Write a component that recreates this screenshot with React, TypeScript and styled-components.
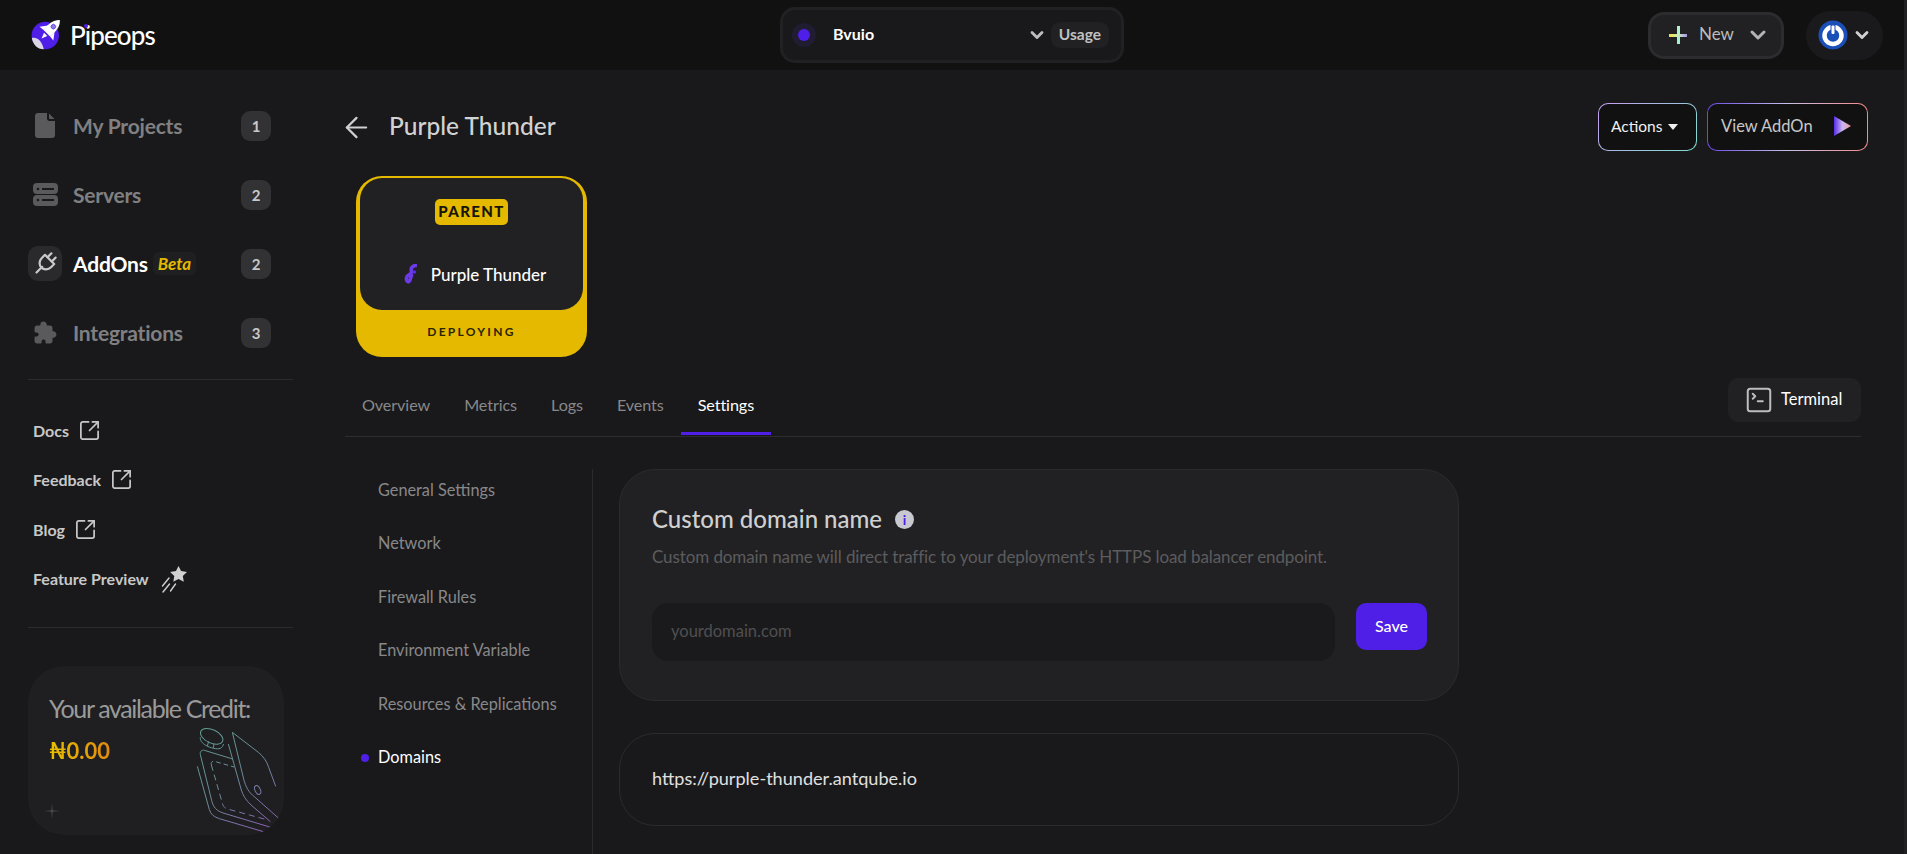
import React from "react";
import styled, { createGlobalStyle } from "styled-components";
import { ArrowLeft, ChevronDown, SquareArrowOutUpRight, SquareTerminal } from "lucide-react";
import { IoExtensionPuzzle } from "react-icons/io5";

const FONT = `"Lato", "Noto Sans", sans-serif`;

const GlobalStyle = createGlobalStyle`
    html, body, #root { height: 100%; }
    body {
        margin: 0;
        background: #19191b;
        font-family: ${FONT};
        color: #fff;
        overflow: hidden;
    }
    * { box-sizing: border-box; }
`;

const navItems = [
    { label: "My Projects", count: 1, icon: <FileIcon /> },
    { label: "Servers", count: 2, icon: <ServerIcon /> },
    { label: "AddOns", count: 2, icon: <PlugIcon />, active: true, beta: true },
    { label: "Integrations", count: 3, icon: <IoExtensionPuzzle size={25} /> },
];
const tabs = ["Overview", "Metrics", "Logs", "Events", "Settings"];
const settingsLinks = ["General Settings", "Network", "Firewall Rules", "Environment Variable", "Resources & Replications", "Domains"];

function FileIcon() {
    return (
        <svg width="20" height="25" viewBox="0 0 20 25" fill="#5a5a5c">
            <path d="M3 0h9v5.500c0 1.400 1 2.500 2.500 2.500H20v14a3 3 0 0 1-3 3H3a3 3 0 0 1-3-3V3a3 3 0 0 1 3-3z" />
            <path d="M14 0.500 19.500 6H15a1 1 0 0 1-1-1z" />
        </svg>
    );
}

function ServerIcon() {
    return (
        <svg width="25" height="23" viewBox="0 0 25 23">
            <rect x="0" y="0" width="25" height="11" rx="4" fill="#5a5a5c" />
            <rect x="0" y="12" width="25" height="11" rx="4" fill="#5a5a5c" />
            <circle cx="5" cy="6" r="1.300" fill="#19191b" />
            <rect x="9" y="5" width="12" height="2" fill="#19191b" />
            <circle cx="5" cy="17" r="1.300" fill="#19191b" />
            <rect x="9" y="16" width="12" height="2" fill="#19191b" />
        </svg>
    );
}

function PlugIcon() {
    return (
        <svg width="26" height="26" viewBox="0 0 26 26" fill="none" stroke="#c9c9c9" strokeWidth="2.200" strokeLinecap="round">
            <g transform="rotate(45 13 13)">
                <path d="M10 6.500V1" />
                <path d="M16 6.500V1" />
                <path d="M6.500 6.500h13v4.500a5.500 6 0 0 1-13 0z" strokeLinejoin="round" />
                <path d="M13 17v8" />
            </g>
        </svg>
    );
}

function RocketLogo() {
    return (
        <svg width="32" height="30" viewBox="0 0 32 30">
            <circle cx="15.300" cy="15.500" r="13.700" fill="#4f1fe8" />
            <path d="M1.800 18c4.500-1.500 10 2 12 11.200C8 29.500 3 25 1.800 18z" fill="#d9d6e6" />
            <g transform="translate(20.500 9.500) rotate(45) scale(1.150)">
                <path d="M0-11.500C4-8 4.800-3 4 4.500H-4C-4.800-3-4-8 0-11.500z" fill="#fff" />
                <path d="M-4-1-8.500 5-4 4.500zM4-1 8.500 5 4 4.500z" fill="#fff" />
                <path d="M-2 6 0 11 2 6z" fill="#fff" />
                <circle cx="0" cy="-3.500" r="2" fill="#8f7ee0" stroke="#4f1fe8" strokeWidth="0.600" />
            </g>
        </svg>
    );
}

function ShootingStar() {
    return (
        <StarSvg width="28" height="28" viewBox="0 0 28 28" fill="none" stroke="#cfcfcf" strokeWidth="1.400" strokeLinecap="round">
            <path d="M17.500 1l2.600 5.100 5.900.9-4.200 4 1 5.800-5.300-2.700-5.200 2.700 1-5.800-4.200-4 5.900-.9z" fill="#d0d0d0" stroke="none" />
            <path d="M8 13 1.500 21" />
            <path d="M8.500 19 2 27" />
            <path d="M14.500 19 9.500 26" />
        </StarSvg>
    );
}

function WalletArt() {
    return (
        <WalletSvg viewBox="540 210 290 340" fill="none" stroke="url(#walletStroke)" strokeWidth="3">
            <defs>
                <linearGradient id="walletStroke" gradientUnits="userSpaceOnUse" x1="560" y1="230" x2="800" y2="510">
                    <stop offset="0" stopColor="#5e9c90" />
                    <stop offset="0.500" stopColor="#6b8a98" />
                    <stop offset="1" stopColor="#8c5fb8" />
                </linearGradient>
            </defs>
            <ellipse cx="605" cy="247" rx="36" ry="20" transform="rotate(25 605 247)" />
            <path d="M571 250c-1 10 5 17 16 24 14 8 34 13 44 9 6-3 9-8 9-13" />
            <path d="M596 262l-4 14M612 270l-2 12" />
            <path d="M667 235l78 60c15 12 26 28 31 45l21 57" />
            <path d="M667 235l34 140c6 24 15 40 33 54l71 63" />
            <path d="M655 270l38 135c6 20 14 33 30 48l58 50" />
            <path d="M668 315l-85-26c-8-2-14 4-12 13l34 138c5 20 14 30 34 37l140 42" />
            <path d="M562 337l36 130c4 14 14 22 30 27l132 39" />
            <path d="M604 333c-2-8 2-12 9-11l59 17" strokeDasharray="14 9" />
            <path d="M604 333l34 118c3 9 8 12 18 15l110 30" strokeDasharray="18 12" />
            <ellipse cx="743" cy="408" rx="8" ry="14" transform="rotate(-25 743 408)" />
        </WalletSvg>
    );
}

export default function App() {
    return (
        <Page>
            <GlobalStyle />
            <Screen>
                <TopBar>
                    <Brand>
                        <RocketLogo />
                        <BrandName>Pipeops</BrandName>
                    </Brand>
                    <ProjectSelect>
                        <ProjectDot />
                        <ProjectName>Bvuio</ProjectName>
                        <ChevronDown size={20} strokeWidth={3.4} color="#bdbdbd" />
                        <UsagePill>Usage</UsagePill>
                    </ProjectSelect>
                    <TopRight>
                        <NewButton>
                            <PlusMark />
                            <span>New</span>
                            <ChevronDown size={24} strokeWidth={3} color="#b5b5b5" />
                        </NewButton>
                        <UserPill>
                            <PowerAvatar viewBox="0 0 30 30">
                                <circle cx="15" cy="15" r="14.500" fill="#1a4fb8" />
                                <circle cx="15" cy="15.500" r="8.500" fill="none" stroke="#fff" strokeWidth="4.500" />
                                <rect x="12.500" y="4" width="5" height="10" fill="#1a4fb8" />
                                <rect x="13.500" y="5.500" width="3" height="8.500" rx="1" fill="#fff" />
                            </PowerAvatar>
                            <ChevronDown size={20} strokeWidth={3.4} color="#d0d0d0" />
                        </UserPill>
                    </TopRight>
                </TopBar>
                <Body>
                    <Sidebar>
                        {navItems.map((item) => (
                            <NavRow key={item.label}>
                                <NavIcon $active={item.active}>{item.icon}</NavIcon>
                                <NavLabel $active={item.active}>{item.label}</NavLabel>
                                {item.beta && <BetaTag>Beta</BetaTag>}
                                <CountBadge>{item.count}</CountBadge>
                            </NavRow>
                        ))}
                        <SideDivider />
                        <SideLinks>
                            <SideLink>Docs<SquareArrowOutUpRight size={23} strokeWidth={1.8} /></SideLink>
                            <SideLink>Feedback<SquareArrowOutUpRight size={23} strokeWidth={1.8} /></SideLink>
                            <SideLink>Blog<SquareArrowOutUpRight size={23} strokeWidth={1.8} /></SideLink>
                            <SideLink>Feature Preview<ShootingStar /></SideLink>
                        </SideLinks>
                        <SideDivider />
                        <CreditCard>
                            <CreditTitle>Your available Credit:</CreditTitle>
                            <CreditAmount>₦0.00</CreditAmount>
                            <Sparkle viewBox="0 0 16 16">
                                <path d="M8 0 8.500 7.500 16 8 8.500 8.500 8 16 7.500 8.500 0 8 7.500 7.500z" fill="#5a5a5c" />
                            </Sparkle>
                            <WalletArt />
                        </CreditCard>
                    </Sidebar>
                    <Content>
                        <HeaderRow>
                            <ArrowLeft size={33} strokeWidth={1.6} color="#d0d0d0" />
                            <PageTitle>Purple Thunder</PageTitle>
                            <HeaderActions>
                                <ActionsButton>Actions<Caret /></ActionsButton>
                                <ViewButton>
                                    View AddOn
                                    <svg width="17" height="20" viewBox="0 0 17 20">
                                        <defs>
                                            <linearGradient id="playFill" x1="0" y1="0" x2="1" y2="0">
                                                <stop offset="0" stopColor="#5a2be8" />
                                                <stop offset="0.500" stopColor="#c9b4f0" />
                                                <stop offset="1" stopColor="#f59a9a" />
                                            </linearGradient>
                                        </defs>
                                        <path d="M0 0 17 10 0 20z" fill="url(#playFill)" />
                                    </svg>
                                </ViewButton>
                            </HeaderActions>
                        </HeaderRow>
                        <NodeCard>
                            <NodeInner>
                                <ParentTag>PARENT</ParentTag>
                                <NodeName>
                                    <svg width="13" height="20" viewBox="0 0 13 20" fill="none" strokeLinecap="round">
                                        <path d="M11.500 1.500C8 2 6.500 4.500 7.500 7.500 8.500 10.500 3 10.500 2.500 13.500 2 16 3.500 18.500 5 17.500 7 16 6.500 13 7.500 11.500" stroke="#6d3ae8" strokeWidth="3.600" />
                                        <circle cx="10.500" cy="8" r="1.700" fill="#5a2be8" />
                                    </svg>
                                    Purple Thunder
                                </NodeName>
                            </NodeInner>
                            <NodeStatus>DEPLOYING</NodeStatus>
                        </NodeCard>
                        <TabRow>
                            {tabs.map((tab) => (
                                <Tab key={tab} $active={tab === "Settings"}>{tab}</Tab>
                            ))}
                            <TerminalButton>
                                <SquareTerminal size={30} strokeWidth={1.6} color="#bdbdbd" />
                                <span>Terminal</span>
                            </TerminalButton>
                        </TabRow>
                        <SettingsArea>
                            <SettingsNav>
                                {settingsLinks.map((link) => (
                                    <SettingsLink key={link} $active={link === "Domains"}>{link}</SettingsLink>
                                ))}
                            </SettingsNav>
                            <Panels>
                                <DomainCard>
                                    <CardTitle>
                                        Custom domain name
                                        <InfoDot>i</InfoDot>
                                    </CardTitle>
                                    <CardHint>Custom domain name will direct traffic to your deployment's HTTPS load balancer endpoint.</CardHint>
                                    <FormRow>
                                        <DomainInput placeholder="yourdomain.com" />
                                        <SaveButton>Save</SaveButton>
                                    </FormRow>
                                </DomainCard>
                                <UrlCard>https://purple-thunder.antqube.io</UrlCard>
                            </Panels>
                        </SettingsArea>
                    </Content>
                </Body>
            </Screen>
            <ScrollEdge />
        </Page>
    );
}

const Page = styled.div`
    display: flex;
    height: 100vh;
    overflow: hidden;
`;
const Screen = styled.div`
    flex: 1;
    min-width: 0;
    display: flex;
    flex-direction: column;
`;
const ScrollEdge = styled.div`
    width: 3px;
    background: #212123;
`;
const TopBar = styled.header`
    height: 70px;
    flex: none;
    display: grid;
    grid-template-columns: 780px 344px 1fr;
    align-items: center;
    background: #111112;
`;
const Brand = styled.div`
    display: flex;
    align-items: center;
    gap: 8px;
    padding-left: 30px;
`;
const BrandName = styled.span`
    position: relative;
    font-size: 26px;
    font-weight: 500;
    letter-spacing: -0.9px;
    color: #fff;
    &::after {
        content: "";
        position: absolute;
        left: 14px;
        top: 5px;
        width: 4px;
        height: 4px;
        border-radius: 50%;
        background: #4f1fe8;
    }
`;
const ProjectSelect = styled.div`
    height: 56px;
    display: flex;
    align-items: center;
    padding: 0 12px 0 9px;
    border: 3px solid #212123;
    border-radius: 15px;
    background: #19191b;
`;
const ProjectDot = styled.span`
    width: 12px;
    height: 12px;
    margin: 0 6px;
    border-radius: 50%;
    background: #4f1fe8;
    box-shadow: 0 0 0 6px #201d33;
`;
const ProjectName = styled.span`
    flex: 1;
    margin-left: 17px;
    padding-bottom: 3px;
    font-size: 16px;
    font-weight: 700;
    color: #fff;
`;
const UsagePill = styled.span`
    margin-left: 4px;
    padding: 0 8px;
    height: 26px;
    line-height: 24px;
    border-radius: 9px;
    background: #212123;
    font-size: 15.500px;
    font-weight: 700;
    color: #c0c0c0;
`;
const TopRight = styled.div`
    display: flex;
    align-items: center;
    justify-content: flex-end;
    padding-right: 21px;
    gap: 22px;
`;
const NewButton = styled.div`
    width: 136px;
    height: 47px;
    display: flex;
    align-items: center;
    padding-left: 18px;
    border: 3px solid #2c2c2e;
    border-radius: 16px;
    background: #212123;
    font-size: 17px;
    color: #bcbcbc;
    span { margin: 0 12px 3px 12px; }
`;
const PlusMark = styled.i`
    position: relative;
    width: 18px;
    height: 18px;
    background:
        linear-gradient(90deg, #f5dc3c 0%, #c8eebb 50%, #a995e8 100%) center / 18px 3px no-repeat,
        linear-gradient(180deg, #b8f0c8, #9ff0d0) center / 3px 18px no-repeat;
`;
const UserPill = styled.div`
    width: 77px;
    height: 49px;
    display: flex;
    align-items: center;
    gap: 4px;
    padding-left: 12px;
    border-radius: 25px;
    background: #1a1a1c;
`;
const PowerAvatar = styled.svg`
    width: 30px;
    height: 30px;
`;
const Body = styled.div`
    flex: 1;
    min-height: 0;
    display: flex;
`;
const Sidebar = styled.aside`
    width: 345px;
    flex: none;
    padding: 21px 52px 0 28px;
`;
const NavRow = styled.div`
    height: 69px;
    display: flex;
    align-items: center;
    padding-right: 22px;
`;
const NavIcon = styled.span<{ $active?: boolean }>`
    width: 34px;
    height: 35px;
    display: flex;
    align-items: center;
    justify-content: center;
    margin-right: 11px;
    border-radius: 10px;
    color: #5a5a5c;
    background: ${(props) => (props.$active ? "#2a2a2c" : "transparent")};
`;
const NavLabel = styled.span<{ $active?: boolean }>`
    font-size: 21px;
    font-weight: 700;
    letter-spacing: -0.2px;
    color: ${(props) => (props.$active ? "#ffffff" : "#808082")};
`;
const BetaTag = styled.span`
    margin-left: 5px;
    padding: 1px 5px;
    border-radius: 5px;
    background: #1f1f21;
    font-size: 17px;
    font-weight: 700;
    font-style: italic;
    color: #e4b900;
`;
const CountBadge = styled.span`
    width: 30px;
    height: 30px;
    margin-left: auto;
    display: flex;
    align-items: center;
    justify-content: center;
    border-radius: 9px;
    background: #323234;
    font-size: 15px;
    font-weight: 700;
    color: #c8c8c8;
`;
const SideDivider = styled.div`
    height: 1px;
    margin-top: 12px;
    background: #2b2b2d;
`;
const SideLinks = styled.div`
    padding: 25.500px 0 11.500px 5px;
`;
const SideLink = styled.div`
    height: 49.500px;
    display: flex;
    align-items: center;
    gap: 9px;
    font-size: 16px;
    font-weight: 700;
    color: #c8c8c8;
`;
const StarSvg = styled.svg`
    margin-left: 3px;
`;
const CreditCard = styled.div`
    position: relative;
    width: 256px;
    height: 169px;
    margin-top: 38px;
    padding: 27px 21px;
    border-radius: 36px;
    background: #1f1f21;
    overflow: hidden;
`;
const CreditTitle = styled.div`
    font-size: 25px;
    font-weight: 400;
    letter-spacing: -1.350px;
    white-space: nowrap;
    color: #9a9a9a;
`;
const CreditAmount = styled.div`
    margin-top: 14px;
    width: fit-content;
    font-size: 22px;
    font-weight: 700;
    background: linear-gradient(90deg, #e8bf00, #e08a10);
    -webkit-background-clip: text;
    background-clip: text;
    color: transparent;
`;
const Sparkle = styled.svg`
    position: absolute;
    left: 16px;
    top: 137px;
    width: 16px;
    height: 16px;
`;
const WalletSvg = styled.svg`
    position: absolute;
    left: 162px;
    top: 58px;
    width: 96.700px;
    height: 113.300px;
`;
const Content = styled.main`
    flex: 1;
    min-width: 0;
    display: flex;
    flex-direction: column;
    padding: 33px 43px 0 0;
`;
const HeaderRow = styled.div`
    height: 48px;
    flex: none;
    display: flex;
    align-items: center;
    margin: 0 -7px 0 -5px;
`;
const PageTitle = styled.h1`
    margin: 0 0 3px 16px;
    font-size: 24.500px;
    font-weight: 500;
    color: #d2d2d2;
`;
const HeaderActions = styled.div`
    margin-left: auto;
    display: flex;
    gap: 10px;
`;
const ActionsButton = styled.button`
    width: 99px;
    height: 48px;
    display: flex;
    align-items: center;
    gap: 6px;
    padding: 0 0 2px 12px;
    border: 1px solid transparent;
    border-radius: 10px;
    background:
        linear-gradient(#111112, #111112) padding-box,
        linear-gradient(135deg, #c79cf0, #7fe0d0) border-box;
    font-family: ${FONT};
    font-size: 15.500px;
    color: #f0f0f0;
`;
const Caret = styled.i`
    margin-top: 2px;
    border-left: 5px solid transparent;
    border-right: 5px solid transparent;
    border-top: 6px solid #f0f0f0;
`;
const ViewButton = styled.button`
    width: 161px;
    height: 48px;
    display: flex;
    align-items: center;
    justify-content: space-between;
    padding: 0 16px 2px 13px;
    border: 1px solid transparent;
    border-radius: 10px;
    background:
        linear-gradient(#111112, #111112) padding-box,
        linear-gradient(90deg, #6a4ae8, #c8c0e8, #f58a8a) border-box;
    font-family: ${FONT};
    font-size: 16.500px;
    color: #c8c8c8;
`;
const NodeCard = styled.div`
    width: 231px;
    height: 181px;
    flex: none;
    margin: 25px 0 0 11px;
    padding: 2px 4px 0;
    border-radius: 26px;
    background: #e4b900;
    display: flex;
    flex-direction: column;
`;
const NodeInner = styled.div`
    height: 132px;
    flex: none;
    display: flex;
    flex-direction: column;
    align-items: center;
    padding-top: 21px;
    border-radius: 22px;
    background: #212123;
`;
const ParentTag = styled.span`
    height: 26px;
    width: 73px;
    display: flex;
    align-items: center;
    justify-content: center;
    padding-bottom: 2px;
    border-radius: 5px;
    background: #e4b900;
    font-size: 15px;
    font-weight: 900;
    letter-spacing: 1.400px;
    color: #17150a;
`;
const NodeName = styled.div`
    display: flex;
    align-items: center;
    gap: 14px;
    height: 24px;
    margin: 37px 0 0 7px;
    font-size: 17px;
    font-weight: 500;
    color: #fff;
`;
const NodeStatus = styled.div`
    flex: 1;
    display: flex;
    align-items: center;
    justify-content: center;
    padding-bottom: 5px;
    font-size: 12px;
    font-weight: 700;
    letter-spacing: 2.300px;
    color: #2a2400;
`;
const TabRow = styled.nav`
    height: 80px;
    flex: none;
    display: flex;
    align-items: flex-end;
    border-bottom: 1px solid #2d2d2f;
`;
const Tab = styled.div<{ $active?: boolean }>`
    height: 58px;
    margin-bottom: 1px;
    display: flex;
    align-items: center;
    padding: 0 17px;
    border-bottom: 3px solid ${(props) => (props.$active ? "#4f1fe8" : "transparent")};
    font-size: 16.200px;
    letter-spacing: -0.1px;
    color: ${(props) => (props.$active ? "#ffffff" : "#88888a")};
`;
const TerminalButton = styled.div`
    width: 133px;
    height: 44px;
    margin: 0 0 14px auto;
    display: flex;
    align-items: center;
    gap: 7px;
    padding-left: 16px;
    border-radius: 10px;
    background: #212123;
    font-size: 16.500px;
    color: #fff;
    span { margin-bottom: 3px; }
`;
const SettingsArea = styled.div`
    flex: 1;
    min-height: 0;
    display: flex;
    margin-top: 32px;
`;
const SettingsNav = styled.div`
    width: 248px;
    flex: none;
    display: flex;
    flex-direction: column;
    gap: 17.600px;
    padding: 2px 0 0 33px;
    border-right: 1px solid #2b2b2d;
`;
const SettingsLink = styled.div<{ $active?: boolean }>`
    position: relative;
    height: 36px;
    display: flex;
    align-items: center;
    font-size: 16.300px;
    color: ${(props) => (props.$active ? "#ffffff" : "#88888a")};
    ${(props) =>
        props.$active &&
        `&::before {
            content: "";
            position: absolute;
            left: -17px;
            top: 15px;
            width: 8px;
            height: 8px;
            border-radius: 50%;
            background: #4f1fe8;
        }`}
`;
const Panels = styled.div`
    width: 840px;
    margin-left: 26px;
    display: flex;
    flex-direction: column;
    gap: 32px;
`;
const DomainCard = styled.section`
    height: 232px;
    padding: 34px 31px 0 32px;
    border: 1px solid #2b2b2d;
    border-radius: 36px;
    background: #212123;
`;
const CardTitle = styled.h2`
    margin: 0;
    height: 30px;
    display: flex;
    align-items: center;
    gap: 13px;
    padding-bottom: 2px;
    font-size: 24px;
    font-weight: 500;
    color: #d0d0d0;
`;
const InfoDot = styled.span`
    width: 19px;
    height: 19px;
    margin-top: 3px;
    display: flex;
    align-items: center;
    justify-content: center;
    border-radius: 50%;
    background: #c8c8d0;
    font-size: 14px;
    font-weight: 700;
    color: #4f1fe8;
`;
const CardHint = styled.p`
    margin: 11px 0 0;
    height: 24px;
    line-height: 24px;
    font-size: 17px;
    letter-spacing: -0.1px;
    color: #5c5c5e;
`;
const FormRow = styled.div`
    display: flex;
    align-items: flex-start;
    gap: 21px;
    margin-top: 34px;
`;
const DomainInput = styled.input`
    flex: 1;
    min-width: 0;
    height: 58px;
    padding: 0 19px 2px;
    border: none;
    outline: none;
    border-radius: 16px;
    background: #1a1a1c;
    font-family: ${FONT};
    font-size: 16.500px;
    color: #ddd;
    &::placeholder { color: #4f4f51; }
`;
const SaveButton = styled.button`
    width: 71px;
    height: 47px;
    padding: 0 0 3px;
    border: none;
    border-radius: 10px;
    background: #4f1fe8;
    font-family: ${FONT};
    font-size: 16px;
    font-weight: 500;
    color: #fff;
`;
const UrlCard = styled.section`
    height: 93px;
    display: flex;
    align-items: center;
    padding: 0 31px 3px 32px;
    border: 1px solid #2b2b2d;
    border-radius: 36px;
    font-size: 18.100px;
    color: #e0e0e0;
`;
